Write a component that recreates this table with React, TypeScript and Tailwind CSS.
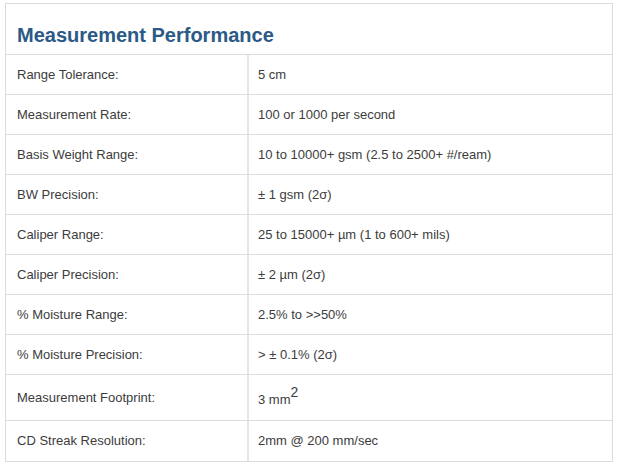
import React from "react";

const rows: { label: string; value: React.ReactNode; tall?: boolean }[] = [
  { label: "Range Tolerance:", value: "5 cm" },
  { label: "Measurement Rate:", value: "100 or 1000 per second" },
  { label: "Basis Weight Range:", value: "10 to 10000+ gsm (2.5 to 2500+ #/ream)" },
  { label: "BW Precision:", value: "± 1 gsm (2σ)" },
  { label: "Caliper Range:", value: "25 to 15000+ µm (1 to 600+ mils)" },
  { label: "Caliper Precision:", value: "± 2 µm (2σ)" },
  { label: "% Moisture Range:", value: "2.5% to >>50%" },
  { label: "% Moisture Precision:", value: "> ± 0.1% (2σ)" },
  {
    label: "Measurement Footprint:",
    value: (
      <span className="relative top-[2px]">
        3 mm<sup className="text-[14px] relative -top-[7px] align-baseline">2</sup>
      </span>
    ),
    tall: true,
  },
  { label: "CD Streak Resolution:", value: "2mm @ 200 mm/sec" },
];

export default function App() {
  return (
    <div className="w-[618px] h-[470px] bg-white pt-[3px] pl-[5px]" style={{ fontFamily: '"Liberation Sans", Arial, sans-serif' }}>
      <div className="w-[608px] border border-[#dcdcdc]">
        <div className="h-[51px] border-b border-[#dcdcdc] pl-[11px] pt-[19px]">
          <h2 className="text-[20px] leading-[24px] font-bold text-[#2b5a86]">Measurement Performance</h2>
        </div>
        {rows.map((r, i) => (
          <div
            key={i}
            className={`flex text-[13px] text-[#3c3c3c] ${i < rows.length - 1 ? "border-b border-[#dcdcdc]" : ""} ${r.tall ? "h-[46px]" : "h-[40px]"}`}
          >
            <div className="w-[243px] border-r-2 border-[#e6e6e6] pl-[11px] flex items-center">{r.label}</div>
            <div className="flex-1 pl-[9px] flex items-center">{r.value}</div>
          </div>
        ))}
      </div>
    </div>
  );
}
